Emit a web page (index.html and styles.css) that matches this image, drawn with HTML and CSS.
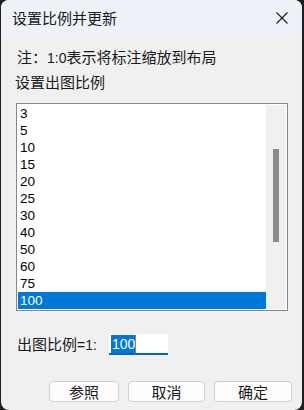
FILE: index.html
```html
<!DOCTYPE html>
<html lang="zh-CN">
<head>
<meta charset="utf-8">
<title>设置比例并更新</title>
<link rel="stylesheet" href="styles.css">
</head>
<body>
<div class="window">
  <div class="titlebar">
    <span class="title">设置比例并更新</span>
    <svg class="close" width="12" height="12" viewBox="0 0 12 12"><path d="M0.5 0.5 L11.5 11.5 M11.5 0.5 L0.5 11.5" stroke="#1a1a1a" stroke-width="1.1" fill="none"/></svg>
  </div>
  <div class="content">
    <div class="note">注：<span class="latin">1:0</span>表示将标注缩放到布局</div>
    <div class="heading">设置出图比例</div>
    <div class="listbox">
      <div class="items">
        <div class="item">3</div>
        <div class="item">5</div>
        <div class="item">10</div>
        <div class="item">15</div>
        <div class="item">20</div>
        <div class="item">25</div>
        <div class="item">30</div>
        <div class="item">40</div>
        <div class="item">50</div>
        <div class="item">60</div>
        <div class="item">75</div>
        <div class="item selected">100</div>
      </div>
      <div class="scrollbar"><div class="thumb"></div></div>
    </div>
    <div class="scale-row">
      <span class="label">出图比例<span class="latin">=1:</span></span>
      <div class="input"><span class="sel">100</span><span class="caret"></span></div>
    </div>
    <div class="buttons">
      <div class="btn b1">参照</div>
      <div class="btn b2">取消</div>
      <div class="btn b3">确定</div>
    </div>
    <div class="buttons second">
      <div class="btn b4"></div>
      <div class="btn b5"></div>
    </div>
  </div>
</div>
</body>
</html>
```
FILE: styles.css
```css
html, body {
  margin: 0;
  padding: 0;
}
body {
  width: 304px;
  height: 410px;
  overflow: hidden;
  background: #1f1f1f;
  font-family: "Noto Sans CJK SC", "Liberation Sans", sans-serif;
  color: #1a1a1a;
}
.window {
  margin-left: 1px;
  width: 301px;
  height: 410px;
  border-radius: 8px;
  background: #f0f0f0;
  overflow: hidden;
  display: flex;
  flex-direction: column;
}
.titlebar {
  height: 36px;
  flex: none;
  background: #eef2f8;
  display: flex;
  align-items: center;
  justify-content: space-between;
  padding-left: 11px;
}
.title {
  font-size: 15px;
  line-height: 20px;
}
.close {
  margin-right: 14px;
}
.content {
  padding-left: 14px;
  font-size: 15px;
}
.latin {
  font-family: "Liberation Sans", sans-serif;
  font-size: 14px;
}
.note {
  margin-top: 10px;
  line-height: 22px;
  padding-left: 2px;
}
.heading {
  margin-top: 2px;
  line-height: 22px;
}
.listbox {
  margin-top: 10px;
  margin-left: 1px;
  width: 272px;
  height: 208px;
  box-sizing: border-box;
  border: 1px solid #828790;
  padding: 1px;
  background: #ffffff;
  display: flex;
}
.items {
  flex: 1;
}
.item {
  height: 17px;
  line-height: 17px;
  padding-left: 2px;
  font-family: "Liberation Sans", sans-serif;
  font-size: 13.5px;
  color: #000;
}
.item.selected {
  background: #0078d7;
  color: #fff;
}
.scrollbar {
  width: 20px;
  background: #f0f0f0;
  padding-top: 44px;
  box-sizing: border-box;
}
.thumb {
  margin-left: 7px;
  width: 6px;
  height: 93px;
  background: #8a8a8a;
}
.scale-row {
  margin-top: 22px;
  display: flex;
  align-items: center;
  padding-left: 2px;
}
.label {
  line-height: 21px;
  width: 92px;
}
.input {
  width: 59px;
  height: 21px;
  box-sizing: border-box;
  background: #fff;
  border-bottom: 2px solid #0067c0;
  padding: 1px 0 0 2px;
  display: flex;
  align-items: flex-start;
}
.sel {
  background: #0078d7;
  color: #fff;
  font-family: "Liberation Sans", sans-serif;
  font-size: 14px;
  line-height: 18px;
  height: 18px;
  padding-left: 1px;
  width: 23px;
}
.caret {
  width: 1px;
  height: 18px;
  background: #c8702a;
}
.buttons {
  margin-top: 25px;
  display: flex;
  gap: 9px;
  padding-left: 34px;
}
.btn {
  height: 21px;
  box-sizing: border-box;
  border: 1px solid #d0d0d0;
  border-radius: 4px;
  background: #fdfdfd;
  font-size: 15px;
  line-height: 19px;
  text-align: center;
  color: #1a1a1a;
}
.b1 { width: 70px; }
.b2 { width: 77px; }
.b3 { width: 78px; }
.buttons.second {
  margin-top: 9px;
  padding-left: 128px;
}
.b4, .b5 { width: 70px; }
```
